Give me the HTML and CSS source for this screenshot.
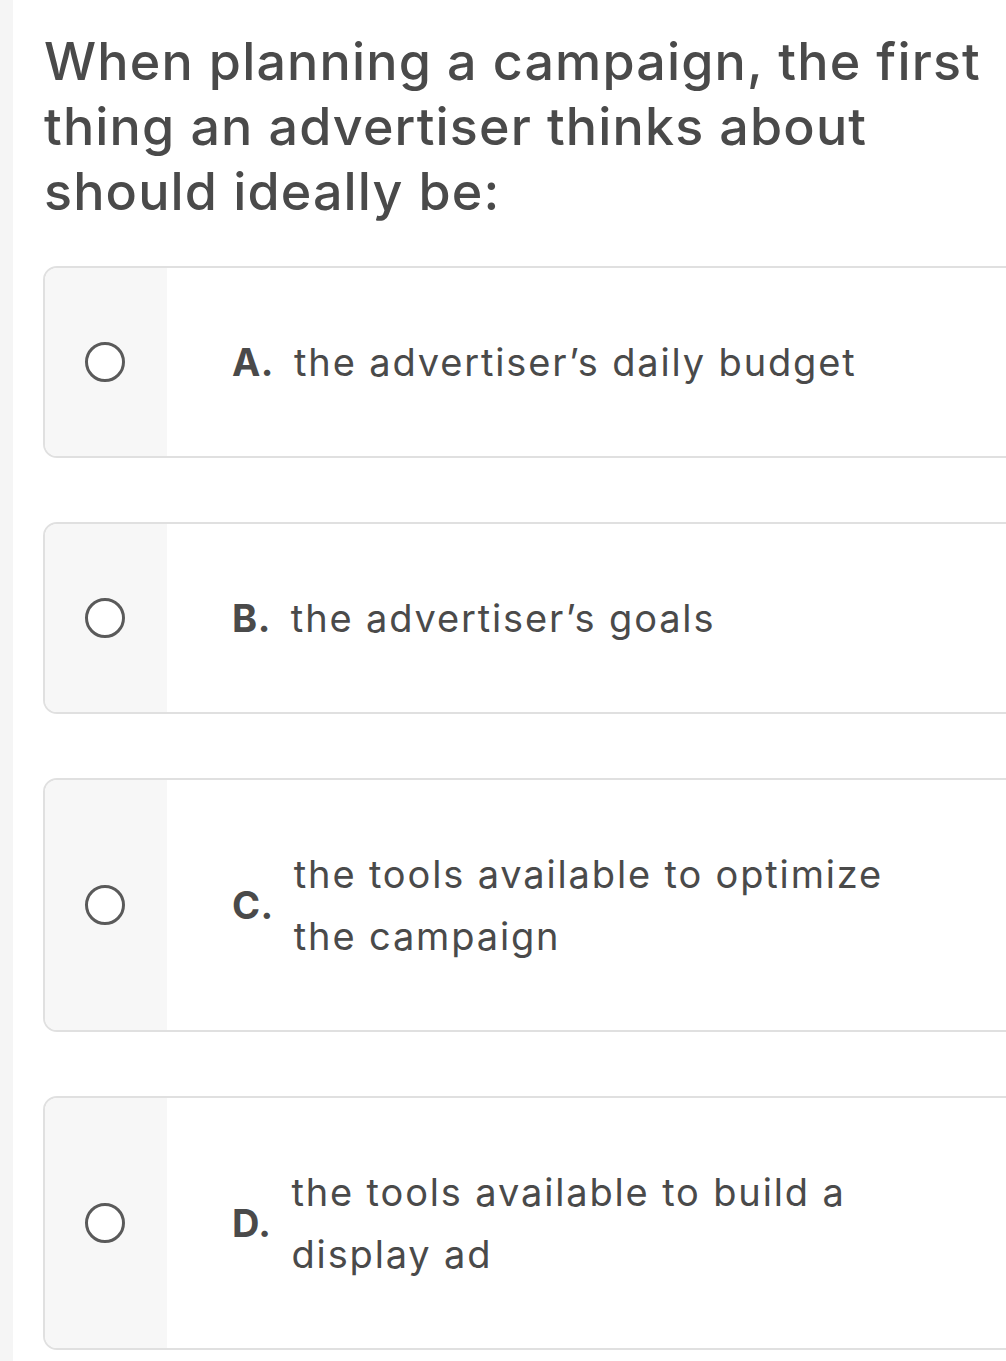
FILE: index.html
```html
<!DOCTYPE html>
<html lang="en">
<head>
<meta charset="utf-8">
<title>Quiz question</title>
<link rel="stylesheet" href="styles.css">
</head>
<body>
<main class="page">
  <h1 class="question">When planning a campaign, the first thing an advertiser thinks about should ideally be:</h1>
  <div class="options">
    <label class="option">
      <span class="option-side"><span class="radio"></span></span>
      <span class="option-body"><span class="letter">A.</span><span class="text">the advertiser’s daily budget</span></span>
    </label>
    <label class="option">
      <span class="option-side"><span class="radio"></span></span>
      <span class="option-body"><span class="letter">B.</span><span class="text">the advertiser’s goals</span></span>
    </label>
    <label class="option">
      <span class="option-side"><span class="radio"></span></span>
      <span class="option-body"><span class="letter">C.</span><span class="text">the tools available to optimize<br>the campaign</span></span>
    </label>
    <label class="option">
      <span class="option-side"><span class="radio"></span></span>
      <span class="option-body"><span class="letter">D.</span><span class="text">the tools available to build a<br>display ad</span></span>
    </label>
  </div>
</main>
</body>
</html>
```

FILE: styles.css
```css
html, body {
  margin: 0;
  padding: 0;
  overflow: hidden;
}
body {
  background: linear-gradient(to right, #f5f5f5 0, #f5f5f5 13px, #ffffff 13px);
  font-family: Inter, "Noto Sans", sans-serif;
  color: #4a4a4a;
  min-height: 1361px;
}
.page {
  padding: 29px 0 0 43px;
}
.question {
  margin: 0 0 42px 1px;
  font-size: 52px;
  line-height: 65px;
  font-weight: 500;
  letter-spacing: 1.15px;
  color: #4a4a4a;
  width: 955px;
}
.options {
  display: flex;
  flex-direction: column;
  gap: 64px;
  width: 1000px;
}
.option {
  display: flex;
  border: 2px solid #e0e0e0;
  border-radius: 14px;
  overflow: hidden;
  background: #ffffff;
}
.option-side {
  width: 122px;
  flex: none;
  background: #f7f7f7;
  display: flex;
  align-items: center;
  justify-content: center;
  padding-right: 2px;
  box-sizing: border-box;
}
.radio {
  width: 40px;
  height: 40px;
  border: 3px solid #5a5a5a;
  border-radius: 50%;
  box-sizing: border-box;
  background: #ffffff;
}
.option-body {
  display: flex;
  align-items: center;
  padding: 63px 0 63px 65px;
  font-size: 38px;
  line-height: 62px;
  letter-spacing: 1.85px;
}
.letter {
  font-weight: 700;
  margin-right: 20px;
  flex: none;
  letter-spacing: 0.5px;
}
.text {
  font-weight: 400;
}
```
